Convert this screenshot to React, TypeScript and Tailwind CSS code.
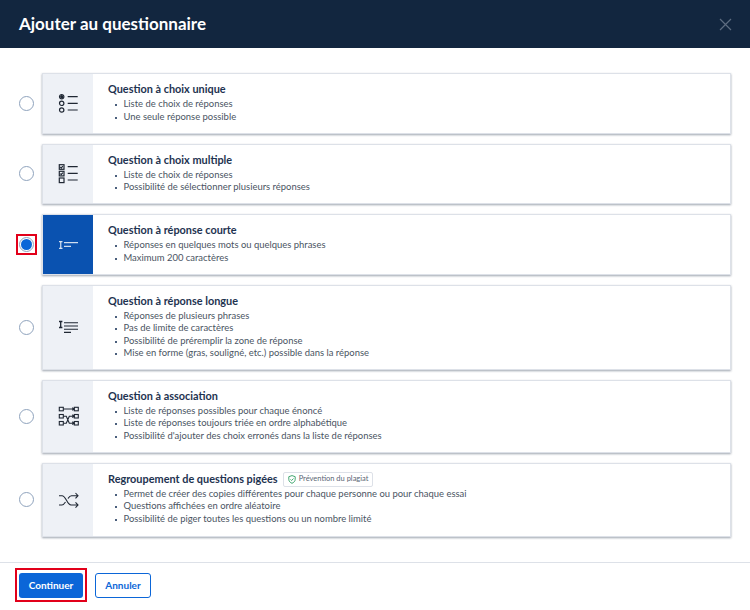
import React from 'react';

type Option = {
    title: string;
    lines: string[];
    icon: React.ReactNode;
    height: string;
    selected?: boolean;
    badge?: string;
};

const SingleIcon = () => (
    <svg width="22" height="22" viewBox="0 0 22 22" fill="none" stroke="currentColor" strokeWidth="1.200">
        <circle cx="4.700" cy="4.700" r="2.200" />
        <circle cx="4.700" cy="4.700" r="1" fill="currentColor" />
        <circle cx="4.700" cy="11.300" r="2.200" />
        <circle cx="4.700" cy="18" r="2.200" />
        <path d="M10.700 4.700h10M10.700 11.300h10M10.700 18h10" />
    </svg>
);

const MultipleIcon = () => (
    <svg width="22" height="22" viewBox="0 0 22 22" fill="none" stroke="currentColor" strokeWidth="1.200">
        <rect x="2.300" y="1.700" width="4.700" height="4.600" />
        <path d="M3.300 4l1 1 1.500-2" />
        <rect x="2.300" y="8.300" width="4.700" height="4.600" />
        <path d="M3.300 10.600l1 1 1.500-2" />
        <rect x="2.300" y="15" width="4.700" height="4.600" />
        <path d="M10.700 3.700h10M10.700 10.300h10M10.700 17h10" />
    </svg>
);

const ShortIcon = () => (
    <svg width="22" height="12" viewBox="0 0 22 12" fill="none" stroke="currentColor" strokeWidth="1">
        <path d="M2 3.700h3.500M3.800 3.700v6.600M2 10.300h3.500" />
        <path d="M7 4.700h14M7 8.300h7" />
    </svg>
);

const LongIcon = () => (
    <svg width="22" height="20" viewBox="0 0 22 20" fill="none" stroke="currentColor" strokeWidth="1.100">
        <path d="M2 4.500h3.400M3.700 4.500v6M2 10.500h3.400" strokeWidth="1.300" />
        <path d="M7 5.700h14M7 9h14M7 12.200h14M7 15.400h7" />
    </svg>
);

const MatchIcon = () => (
    <svg width="22" height="22" viewBox="0 0 22 22" fill="none" stroke="currentColor" strokeWidth="1.100">
        <rect x="2.300" y="2.300" width="4" height="3.500" />
        <rect x="2.300" y="9.500" width="4" height="3.500" />
        <rect x="2.300" y="16.500" width="4" height="3.500" />
        <rect x="17.300" y="2.300" width="4" height="3.500" />
        <rect x="17.300" y="9.500" width="4" height="3.500" />
        <rect x="17.300" y="16.500" width="4" height="3.500" />
        <path d="M6.300 4h11M15.300 2.600l2 1.400-2 1.400M6.300 11.200h3l3 7h5M6.300 18.200h3l3-7h5M15.300 9.800l2 1.400-2 1.400M15.300 16.800l2 1.400-2 1.400" />
    </svg>
);

const ShuffleIcon = () => (
    <svg width="22" height="18" viewBox="0 0 22 18" fill="none" stroke="currentColor" strokeWidth="1.100">
        <path d="M2 4.700h3c4 0 5 9.300 9 9.300h7M2 14h3c1.500 0 2.500-1.500 3.500-3M11 7.500c1-1.500 1.800-2.800 3.500-2.800H21M18.500 2l2.500 2.700-2.500 2.700M18.500 11.300l2.500 2.700-2.500 2.700" />
    </svg>
);

const options: Option[] = [
    {
        title: 'Question à choix unique',
        lines: ['Liste de choix de réponses', 'Une seule réponse possible'],
        icon: <SingleIcon />,
        height: 'h-[60.5px]',
    },
    {
        title: 'Question à choix multiple',
        lines: ['Liste de choix de réponses', 'Possibilité de sélectionner plusieurs réponses'],
        icon: <MultipleIcon />,
        height: 'h-[60.5px]',
    },
    {
        title: 'Question à réponse courte',
        lines: ['Réponses en quelques mots ou quelques phrases', 'Maximum 200 caractères'],
        icon: <ShortIcon />,
        height: 'h-[60.5px]',
        selected: true,
    },
    {
        title: 'Question à réponse longue',
        lines: [
            'Réponses de plusieurs phrases',
            'Pas de limite de caractères',
            'Possibilité de préremplir la zone de réponse',
            'Mise en forme (gras, souligné, etc.) possible dans la réponse',
        ],
        icon: <LongIcon />,
        height: 'h-[85px]',
    },
    {
        title: 'Question à association',
        lines: [
            'Liste de réponses possibles pour chaque énoncé',
            'Liste de réponses toujours triée en ordre alphabétique',
            "Possibilité d'ajouter des choix erronés dans la liste de réponses",
        ],
        icon: <MatchIcon />,
        height: 'h-[73px]',
    },
    {
        title: 'Regroupement de questions pigées',
        lines: [
            'Permet de créer des copies différentes pour chaque personne ou pour chaque essai',
            'Questions affichées en ordre aléatoire',
            'Possibilité de piger toutes les questions ou un nombre limité',
        ],
        icon: <ShuffleIcon />,
        height: 'h-[74px]',
        badge: 'Prévention du plagiat',
    },
];

const OptionRow: React.FC<{ option: Option }> = ({ option }) => (
    <div className="flex items-center">
        <div className="w-[42px] flex justify-center shrink-0 pl-[10px]">
            {option.selected ? (
                <span className="w-[21px] h-[21px] border-2 border-[#e2001a] flex items-center justify-center">
                    <span className="w-[15px] h-[15px] rounded-full border border-[#8fa3bd] bg-white flex items-center justify-center">
                        <span className="w-[11px] h-[11px] rounded-full bg-[#0b66d8]"></span>
                    </span>
                </span>
            ) : (
                <span className="w-[15px] h-[15px] rounded-full border border-[#8fa3bd] bg-white"></span>
            )}
        </div>
        <div className={`flex flex-1 ${option.height} bg-white border border-[#dde1e8] shadow-[0_1px_2px_rgba(40,55,80,0.45)]`}>
            <div className={`w-[50px] shrink-0 flex items-center justify-center ${option.selected ? 'bg-[#0a52b0] text-white' : 'bg-[#eef1f6] text-[#1f2733]'}`}>
                {option.icon}
            </div>
            <div className="pl-[15px] pt-[8px]">
                <div className="flex items-center h-[15px]">
                    <span className="text-[10.9px] font-bold text-[#1e3350]">{option.title}</span>
                    {option.badge && (
                        <span className="ml-[5px] h-[15px] px-[4px] flex items-center gap-[3px] border border-[#dde1e8] rounded-[2px] text-[7.5px] text-[#5a6675]">
                            <svg width="8" height="9" viewBox="0 0 8 9" fill="none" stroke="#2f9e62" strokeWidth="0.900">
                                <path d="M4 .6l3.200 1.100v2.600c0 2-1.500 3.300-3.200 4-1.700-.7-3.200-2-3.200-4V1.700z" />
                                <path d="M2.500 4.400l1.100 1.100 1.900-2" />
                            </svg>
                            {option.badge}
                        </span>
                    )}
                </div>
                <ul className="mt-[1px] pl-[15.500px] text-[9.45px] leading-[12.500px] text-[#4a5462]">
                    {option.lines.map(line => (
                        <li key={line} className="flex items-center whitespace-nowrap relative">
                            <span className="absolute left-[-9px] top-[6px] w-[2px] h-[2px] bg-[#4a5f7c]"></span>
                            {line}
                        </li>
                    ))}
                </ul>
            </div>
        </div>
    </div>
);

export default function App() {
    return (
        <div className="w-[750px] h-[610px] bg-white overflow-hidden flex flex-col font-['Lato',sans-serif]">
            <header className="h-12 shrink-0 bg-[#12263f] flex items-center justify-between pl-[19px] pr-[18px]">
                <h1 className="text-[17px] font-bold text-white">Ajouter au questionnaire</h1>
                <svg width="13" height="13" viewBox="0 0 13 13" stroke="#5d6c80" strokeWidth="1.200">
                    <path d="M1 1l11 11M12 1L1 12" />
                </svg>
            </header>

            <main className="flex-1 pt-[25px] pr-[19px] flex flex-col gap-[10px]">
                {options.map(option => (
                    <OptionRow key={option.title} option={option} />
                ))}
            </main>

            <footer className="h-[48px] shrink-0 border-t border-[#dde1e8] flex items-start pt-[5px] pl-[15px] gap-[8px]">
                <div className="border-2 border-[#e2001a] p-[2px] pt-[3px]">
                    <button className="block w-[64px] h-[25px] rounded-[3px] bg-[#0b66d8] text-white text-[10px] font-bold">
                        Continuer
                    </button>
                </div>
                <button className="mt-[5px] w-[56px] h-[25px] rounded-[3px] bg-white border border-[#0b66d8] text-[#0b66d8] text-[10px] font-bold">
                    Annuler
                </button>
            </footer>
        </div>
    );
}
